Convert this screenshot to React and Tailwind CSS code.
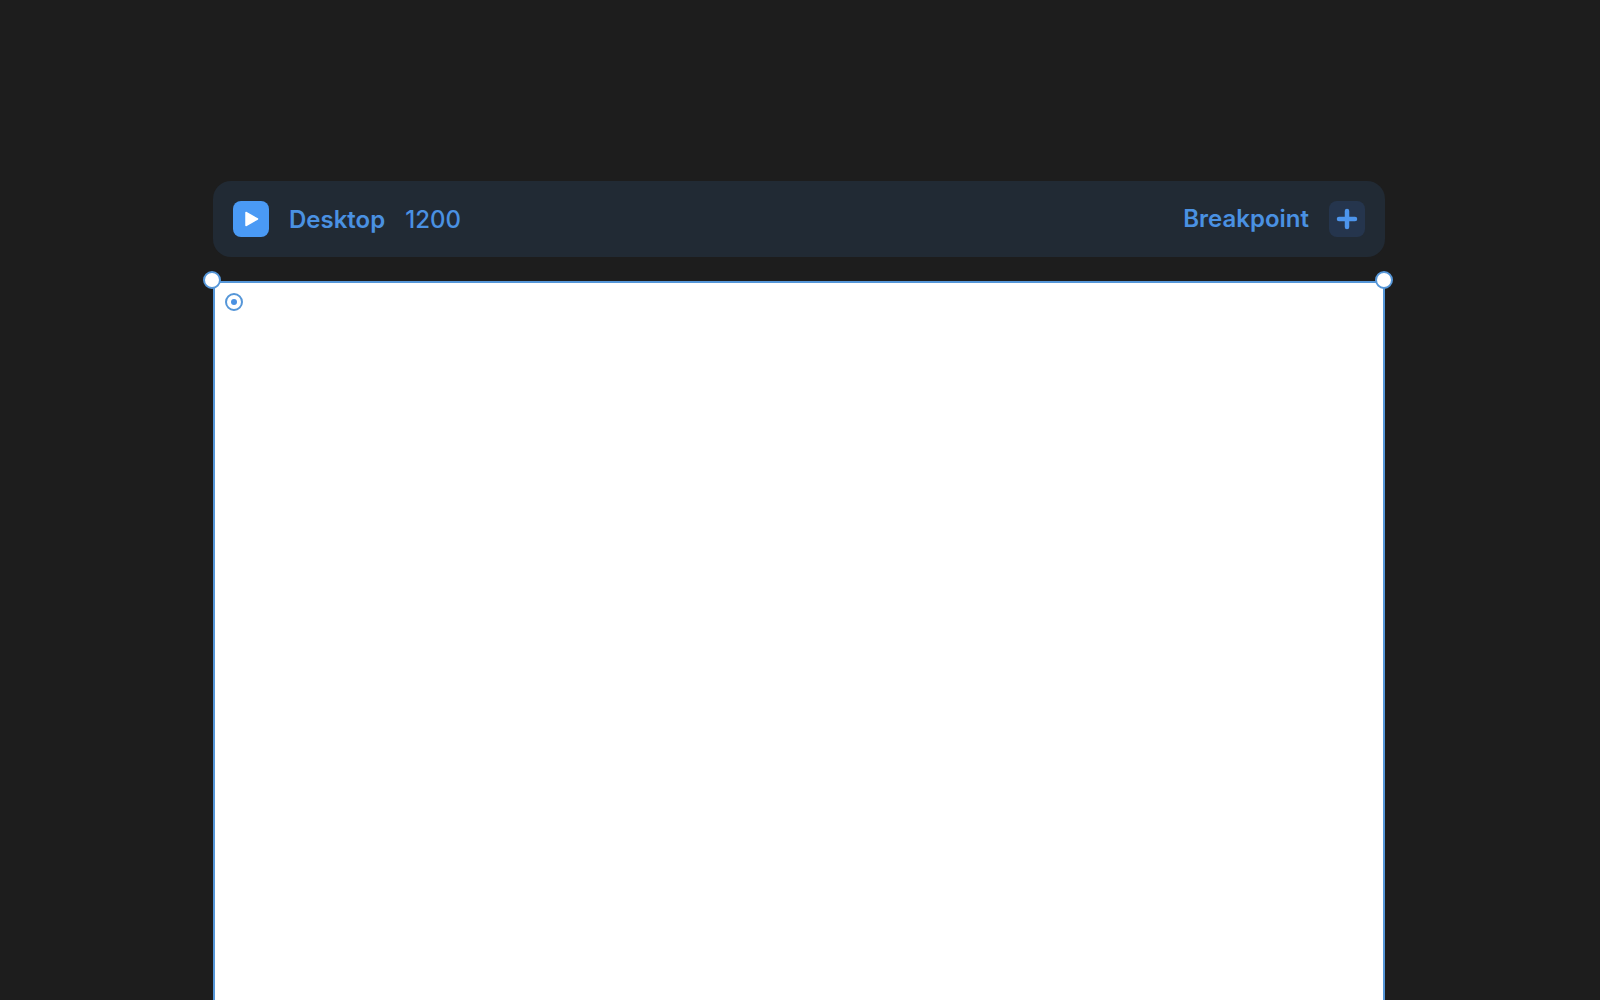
import React from "react";

const App = () => {
  return (
    <div className="h-[1000px] overflow-hidden bg-[#1d1d1d] pt-[181px] pl-[213px] font-['Inter',sans-serif]">
      <div className="flex w-[1172px] flex-col gap-6">
        <div className="flex h-[76px] items-center justify-between rounded-[18px] bg-[#212a34] px-5">
          <div className="flex items-center gap-5 text-2xl text-[#4a91e2]">
            <button className="flex h-9 w-9 items-center justify-center rounded-lg bg-[#4a9af5]">
              <svg width="20" height="20" viewBox="0 0 20 20">
                <path d="M5 3.5 L16.5 10 L5 16.5 Z" fill="#ffffff" stroke="#ffffff" strokeWidth="1.5" strokeLinejoin="round" />
              </svg>
            </button>
            <span className="pt-[2px] font-semibold">Desktop</span>
            <span className="pt-[2px] font-medium">1200</span>
          </div>
          <div className="flex items-center gap-5 text-2xl text-[#4a91e2]">
            <span className="font-semibold">Breakpoint</span>
            <button className="flex h-9 w-9 items-center justify-center rounded-lg bg-[#25354d]">
              <svg width="22" height="22" viewBox="0 0 22 22">
                <path d="M11 3 V19 M3 11 H19" stroke="#4d95ec" strokeWidth="4.5" strokeLinecap="round" />
              </svg>
            </button>
          </div>
        </div>
        <div className="relative h-[800px] rounded-[4px] border-2 border-[#5596d8] bg-white">
          <div className="absolute -left-[12px] -top-[12px] h-[18px] w-[18px] rounded-full border-2 border-[#5596d8] bg-white" />
          <div className="absolute -right-[10px] -top-[12px] h-[18px] w-[18px] rounded-full border-2 border-[#5596d8] bg-white" />
          <div className="absolute left-[10px] top-[10px] flex h-[18px] w-[18px] items-center justify-center rounded-full border-2 border-[#5596d8]">
            <div className="h-1.5 w-1.5 rounded-full bg-[#4a91e2]" />
          </div>
        </div>
      </div>
    </div>
  );
};

export default App;
